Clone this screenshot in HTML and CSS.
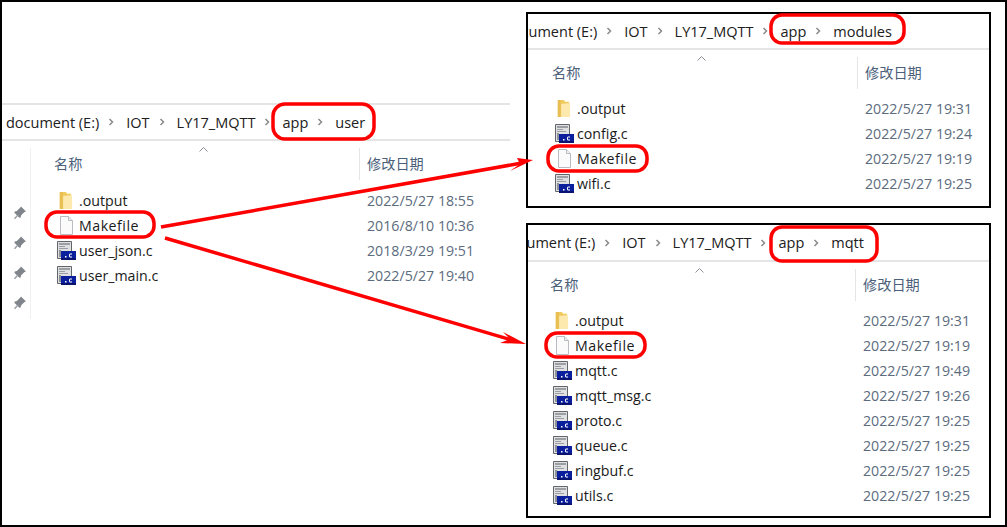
FILE: index.html
```html
<!DOCTYPE html>
<html lang="zh">
<head>
<meta charset="utf-8">
<title>Makefile</title>
<link rel="stylesheet" href="styles.css">
</head>
<body>
<svg width="0" height="0" class="defs">
  <defs>
    <symbol id="folder" viewBox="0 0 14 17">
      <path d="M1 1h5.500l1 1.500H11V16H1z" fill="#f0c95f"/>
      <path d="M1 1h2.500v15H1z" fill="#e8bd52"/>
      <path d="M4 4.500l8-1V16H4z" fill="#fde9ae"/>
    </symbol>
    <symbol id="doc" viewBox="0 0 15 19">
      <path d="M1.500 .5h8l4 4v14h-12z" fill="#fbfbfb" stroke="#b9bdc1"/>
      <path d="M9.500 .5v4h4" fill="#eceef0" stroke="#b9bdc1"/>
    </symbol>
    <symbol id="cfile" viewBox="0 0 19 19">
      <path d="M.5.500h14v17H.5z" fill="#dfe0e2" stroke="#62666b"/>
      <path d="M2 2h11v2H2zM2 5h6v1H2zM2 7h9v1H2z" fill="#9b9fa4"/>
      <path d="M2 9h2v7H2z" fill="#8e9197"/>
      <path d="M4 10h15v9H4z" fill="#0b1f9c"/>
      <path d="M4 17h15v2H4z" fill="#0a1470"/>
      <path d="M8 15h1.500v1.500H8z" fill="#fff"/>
      <path d="M15 12.500h-2l-1 1v2l1 1h2v-1h-1.700l-.3-.3v-1.400l.3-.3H15z" fill="#fff"/>
    </symbol>
    <symbol id="pin" viewBox="0 0 14 14">
      <path d="M8 1l5 5-1.500.6-3.300 3.200-.6 2.200-1.200.3-5-5 .3-1.200L3.900 5.500 7.100 2.300z" fill="#7f858b" transform="translate(0 -.5)"/>
      <path d="M5 9l-3.500 3.800" stroke="#9aa0a6" stroke-width="1.500"/>
    </symbol>
    <symbol id="chev" viewBox="0 0 6 8">
      <path d="M1.500 1l3 3-3 3" fill="none" stroke="#8a8a8a" stroke-width="1.500"/>
    </symbol>
  </defs>
</svg>

<main class="canvas">

  <section class="window window-main">
    <nav class="crumbs">
      <span>document (E:)</span><svg class="chev"><use href="#chev"/></svg>
      <span>IOT</span><svg class="chev"><use href="#chev"/></svg>
      <span>LY17_MQTT</span><svg class="chev"><use href="#chev"/></svg>
      <span>app</span><svg class="chev"><use href="#chev"/></svg>
      <span>user</span>
    </nav>
    <div class="pane">
      <aside class="pins">
        <svg class="pin"><use href="#pin"/></svg>
        <svg class="pin"><use href="#pin"/></svg>
        <svg class="pin"><use href="#pin"/></svg>
        <svg class="pin"><use href="#pin"/></svg>
      </aside>
      <div class="list">
        <header class="head"><span class="head-name">名称<svg class="caret" viewBox="0 0 9 5"><path d="M.5 4.500l4-4 4 4" fill="none" stroke="#8b8f94"/></svg></span><span class="head-date">修改日期</span></header>
        <ul class="rows">
          <li class="row"><svg class="ico"><use href="#folder"/></svg><span class="name">.output</span><span class="date">2022/5/27 18:55</span></li>
          <li class="row"><svg class="ico"><use href="#doc"/></svg><span class="name wide">Makefile</span><span class="date">2016/8/10 10:36</span></li>
          <li class="row"><svg class="ico"><use href="#cfile"/></svg><span class="name">user_json.c</span><span class="date">2018/3/29 19:51</span></li>
          <li class="row"><svg class="ico"><use href="#cfile"/></svg><span class="name">user_main.c</span><span class="date">2022/5/27 19:40</span></li>
        </ul>
      </div>
    </div>
  </section>

  <section class="window window-boxed window-modules">
    <nav class="crumbs">
      <span>document (E:)</span><svg class="chev"><use href="#chev"/></svg>
      <span>IOT</span><svg class="chev"><use href="#chev"/></svg>
      <span>LY17_MQTT</span><svg class="chev"><use href="#chev"/></svg>
      <span>app</span><svg class="chev"><use href="#chev"/></svg>
      <span>modules</span>
    </nav>
    <div class="pane">
      <div class="list">
        <header class="head"><span class="head-name">名称<svg class="caret" viewBox="0 0 9 5"><path d="M.5 4.500l4-4 4 4" fill="none" stroke="#8b8f94"/></svg></span><span class="head-date">修改日期</span></header>
        <ul class="rows">
          <li class="row"><svg class="ico"><use href="#folder"/></svg><span class="name">.output</span><span class="date">2022/5/27 19:31</span></li>
          <li class="row"><svg class="ico"><use href="#cfile"/></svg><span class="name">config.c</span><span class="date">2022/5/27 19:24</span></li>
          <li class="row"><svg class="ico"><use href="#doc"/></svg><span class="name wide">Makefile</span><span class="date">2022/5/27 19:19</span></li>
          <li class="row"><svg class="ico"><use href="#cfile"/></svg><span class="name">wifi.c</span><span class="date">2022/5/27 19:25</span></li>
        </ul>
      </div>
    </div>
  </section>

  <section class="window window-boxed window-mqtt">
    <nav class="crumbs">
      <span>document (E:)</span><svg class="chev"><use href="#chev"/></svg>
      <span>IOT</span><svg class="chev"><use href="#chev"/></svg>
      <span>LY17_MQTT</span><svg class="chev"><use href="#chev"/></svg>
      <span>app</span><svg class="chev"><use href="#chev"/></svg>
      <span>mqtt</span>
    </nav>
    <div class="pane">
      <div class="list">
        <header class="head"><span class="head-name">名称<svg class="caret" viewBox="0 0 9 5"><path d="M.5 4.500l4-4 4 4" fill="none" stroke="#8b8f94"/></svg></span><span class="head-date">修改日期</span></header>
        <ul class="rows">
          <li class="row"><svg class="ico"><use href="#folder"/></svg><span class="name">.output</span><span class="date">2022/5/27 19:31</span></li>
          <li class="row"><svg class="ico"><use href="#doc"/></svg><span class="name wide">Makefile</span><span class="date">2022/5/27 19:19</span></li>
          <li class="row"><svg class="ico"><use href="#cfile"/></svg><span class="name">mqtt.c</span><span class="date">2022/5/27 19:49</span></li>
          <li class="row"><svg class="ico"><use href="#cfile"/></svg><span class="name">mqtt_msg.c</span><span class="date">2022/5/27 19:26</span></li>
          <li class="row"><svg class="ico"><use href="#cfile"/></svg><span class="name">proto.c</span><span class="date">2022/5/27 19:25</span></li>
          <li class="row"><svg class="ico"><use href="#cfile"/></svg><span class="name">queue.c</span><span class="date">2022/5/27 19:25</span></li>
          <li class="row"><svg class="ico"><use href="#cfile"/></svg><span class="name">ringbuf.c</span><span class="date">2022/5/27 19:25</span></li>
          <li class="row"><svg class="ico"><use href="#cfile"/></svg><span class="name">utils.c</span><span class="date">2022/5/27 19:25</span></li>
        </ul>
      </div>
    </div>
  </section>

  <svg class="annotations" viewBox="0 0 1007 527">
    <g class="ring">
      <rect x="273" y="104" width="101" height="35" rx="12"/>
      <rect x="46" y="212" width="108" height="25" rx="11"/>
      <rect x="771" y="15" width="133" height="28" rx="11"/>
      <rect x="548" y="146" width="99" height="25" rx="11"/>
      <rect x="771" y="227" width="106" height="34" rx="11"/>
      <rect x="546" y="333" width="99" height="24" rx="11"/>
    </g>
    <path class="shaft" d="M161 227L522 163"/>
    <path class="head-arrow" d="M517 158L533 160L510 171L520 164z"/>
    <path class="shaft" d="M165 238L515 341"/>
    <path class="head-arrow" d="M503 332L526 344L500 343L510 339z"/>
  </svg>
</main>
</body>
</html>
```

FILE: styles.css
```css
* { box-sizing: border-box; }

html, body {
  margin: 0;
  padding: 0;
  background: #fff;
}

body {
  font-family: "Open Sans", "Noto Sans CJK SC", sans-serif;
  font-size: 14.2px;
  color: #1a1a1a;
}

.defs { position: absolute; }

.canvas {
  position: relative;
  width: 1007px;
  height: 527px;
  border: 2px solid #000;
  overflow: hidden;
  background: #fff;
}

.window {
  position: absolute;
  overflow: hidden;
  background: #fff;
  --crumb-shift: 0px;
  --list-start: 29px;
}

.window-main {
  left: 0;
  top: 101px;
  width: 508px;
  height: 216px;
}

.window-boxed {
  left: 524px;
  width: 465px;
  border: 2px solid #000;
}

.window-modules {
  top: 10px;
  height: 196px;
  --crumb-shift: -28px;
  --list-start: 24px;
}

.window-mqtt {
  top: 221px;
  height: 295px;
  --crumb-shift: -30px;
  --list-start: 22px;
}

.crumbs {
  display: flex;
  align-items: center;
  height: 37px;
  margin-left: var(--crumb-shift);
  padding-left: 4px;
  border-bottom: 2px solid #e5e5e5;
  white-space: nowrap;
  color: #202020;
  font-size: 14.5px;
}

.window-main .crumbs {
  border-top: 2px solid #e5e5e5;
  height: 38px;
}

.window-boxed .crumbs { height: 36px; }
.window-mqtt .crumbs { height: 37px; }

.chev {
  flex: none;
  width: 6px;
  height: 8px;
  margin: 0 12px 0 9px;
}

.pane { display: flex; }

.pins {
  flex: none;
  width: 29px;
  height: 174px;
  padding: 58px 0 0 11px;
  display: flex;
  flex-direction: column;
  gap: 16px;
  border-right: 1px solid #f0f0f0;
  margin-top: 7px;
}

.pin {
  width: 14px;
  height: 14px;
}

.list {
  flex: 1;
  padding-left: var(--list-start);
}

.window-main .list { padding-left: 23px; }

.head {
  display: flex;
  height: 32px;
  margin-top: 7px;
  color: #4c607a;
}

.head-name {
  position: relative;
  flex: none;
  width: 305px;
  line-height: 32px;
}

.caret {
  position: absolute;
  left: 145px;
  top: -1px;
  width: 9px;
  height: 5px;
}

.head-date {
  flex: 1;
  border-left: 1px solid #e5e5e5;
  padding-left: 7px;
  line-height: 32px;
}

.rows {
  list-style: none;
  margin: 8px 0 0;
  padding: 0;
}

.window-boxed .rows { margin-top: 7px; }

.row {
  display: flex;
  align-items: center;
  height: 25px;
  padding-left: 3px;
}

.ico {
  flex: none;
  width: 19px;
  height: 19px;
  margin-right: 3px;
}

.name {
  flex: none;
  width: 288px;
  color: #1a1a1a;
}

.wide { letter-spacing: .5px; }

.date {
  color: #5c6b7e;
}

.annotations {
  position: absolute;
  left: -2px;
  top: -2px;
  width: 1007px;
  height: 527px;
  pointer-events: none;
}

.ring rect {
  fill: none;
  stroke: #f00;
  stroke-width: 3.5;
}

.shaft {
  fill: none;
  stroke: #f00;
  stroke-width: 3.5;
}

.head-arrow { fill: #f00; }
```
